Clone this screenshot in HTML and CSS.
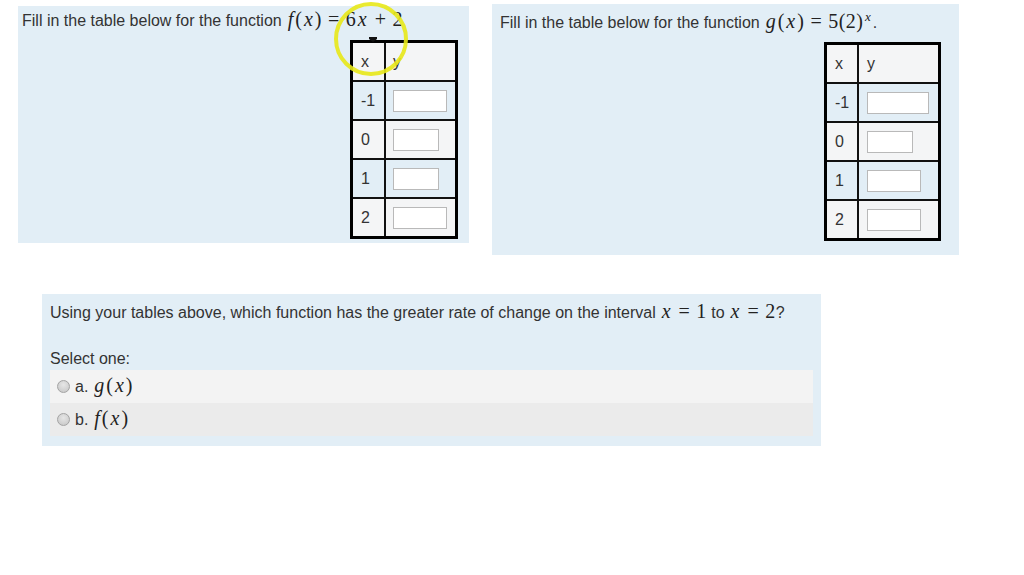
FILE: index.html
```html
<!DOCTYPE html>
<html>
<head>
<meta charset="utf-8">
<link rel="stylesheet" href="styles.css">
</head>
<body>
<div class="top">
  <div class="panel p1">
    <p class="qtext">Fill in the table below for the function <span class="math"><i>f</i>(<i>x</i>)<span class="rel">=</span>6<i>x</i><span class="bin">+</span>2</span></p>
    <table class="vt t1">
      <tr><td class="xc">x</td><td class="yc">y</td></tr>
      <tr><td class="xc">-1</td><td class="yc"><span class="inp w54"></span></td></tr>
      <tr><td class="xc">0</td><td class="yc"><span class="inp w46"></span></td></tr>
      <tr><td class="xc">1</td><td class="yc"><span class="inp w46"></span></td></tr>
      <tr><td class="xc">2</td><td class="yc"><span class="inp w54"></span></td></tr>
    </table>
  </div>
  <div class="panel p2">
    <p class="qtext">Fill in the table below for the function <span class="math"><i>g</i>(<i>x</i>)<span class="rel">=</span>5(2)<sup><i>x</i></sup></span>.</p>
    <table class="vt t2">
      <tr><td class="xc">x</td><td class="yc">y</td></tr>
      <tr><td class="xc">-1</td><td class="yc"><span class="inp w62"></span></td></tr>
      <tr><td class="xc">0</td><td class="yc"><span class="inp w46"></span></td></tr>
      <tr><td class="xc">1</td><td class="yc"><span class="inp w54"></span></td></tr>
      <tr><td class="xc">2</td><td class="yc"><span class="inp w54"></span></td></tr>
    </table>
  </div>
</div>
<div class="panel p3">
  <p class="qtext">Using your tables above, which function has the greater rate of change on the interval <span class="math"><i>x</i><span class="rel">=</span>1</span> to <span class="math"><i>x</i><span class="rel">=</span>2</span>?</p>
  <p class="prompt">Select one:</p>
  <div class="answer">
    <div class="opt r0"><span class="radio"></span><span class="lbl">a. <span class="math"><i>g</i>(<i>x</i>)</span></span></div>
    <div class="opt r1"><span class="radio"></span><span class="lbl">b. <span class="math"><i>f</i>(<i>x</i>)</span></span></div>
  </div>
</div>
<div class="highlight"></div>
<svg class="cursor" width="8" height="5" viewBox="0 0 8 5"><path d="M0 0 L8 0 L8 2 L4 5 L0 2 Z" fill="#111"/></svg>
</body>
</html>
```

FILE: styles.css
```css
html, body {
  margin: 0;
  padding: 0;
  background: #ffffff;
}
body {
  font-family: "Liberation Sans", Arial, sans-serif;
  font-size: 16px;
  color: #333333;
  position: relative;
  width: 1024px;
  height: 575px;
  overflow: hidden;
}
.top {
  display: flex;
  align-items: flex-start;
  padding-left: 18px;
  gap: 23px;
}
.panel {
  background: #e2eef6;
  box-sizing: border-box;
}
.p1 {
  margin-top: 6px;
  width: 451px;
  padding: 4px 4px 4px 4px;
}
.p2 {
  margin-top: 4px;
  width: 467px;
  padding: 8px 8px 14px 8px;
}
.p3 {
  margin-top: 39px;
  margin-left: 42px;
  width: 779px;
  padding: 8px 8px 10px 8px;
}
.qtext, .prompt {
  margin: 0;
  line-height: 22px;
}
.prompt {
  margin-top: 24px;
}
.math {
  font-family: "Liberation Serif", "Times New Roman", serif;
  font-size: 20px;
  line-height: 0;
  letter-spacing: 0.5px;
  color: #222;
}
.math i {
  padding: 0 1.5px;
}
.math .rel {
  margin: 0 6px;
}
.math .bin {
  margin: 0 6px;
}
.math sup {
  font-size: 13px;
  line-height: 0;
  vertical-align: 7px;
}
.vt {
  border-collapse: separate;
  border-spacing: 0;
  border: 3px solid #000;
  color: #333;
}
.t1 {
  margin-top: 8px;
  margin-left: 328px;
}
.t2 {
  margin-top: 8px;
  margin-left: 324px;
}
.vt td {
  height: 37px;
  padding: 0;
  border-right: 2px solid #111;
  border-bottom: 2px solid #111;
  vertical-align: middle;
}
.vt tr td:last-child {
  border-right: 0;
}
.vt tr:last-child td {
  border-bottom: 0;
}
.vt tr:nth-child(odd) td {
  background: #f4f5f6;
}
.vt .xc {
  width: 23px;
  padding-left: 8px;
}
.t2 .xc {
  width: 22px;
}
.t1 .yc {
  width: 62px;
  padding-left: 7px;
}
.t2 .yc {
  width: 71px;
  padding-left: 8px;
}
.inp {
  display: block;
  height: 22px;
  box-sizing: border-box;
  background: #ffffff;
  border: 1px solid #b9b9b9;
}
.w46 { width: 46px; }
.w54 { width: 54px; }
.w62 { width: 62px; }
.answer {
  display: flex;
  flex-direction: column;
}
.opt {
  display: flex;
  align-items: center;
  height: 33px;
  padding-left: 7px;
}
.r0 { background: #f3f3f3; }
.r1 { background: #ebebeb; }
.radio {
  width: 11px;
  height: 11px;
  border-radius: 50%;
  border: 1px solid #a3a3a3;
  background: radial-gradient(circle at 50% 35%, #e6e6e6 0%, #c4c4c4 100%);
  margin-right: 5px;
}
.lbl {
  line-height: 22px;
}
.highlight {
  position: absolute;
  left: 334px;
  top: 2px;
  width: 66px;
  height: 66px;
  border: 4px solid rgba(232, 232, 24, 0.9);
  border-radius: 50%;
}
.cursor {
  position: absolute;
  left: 369px;
  top: 37px;
}
```
